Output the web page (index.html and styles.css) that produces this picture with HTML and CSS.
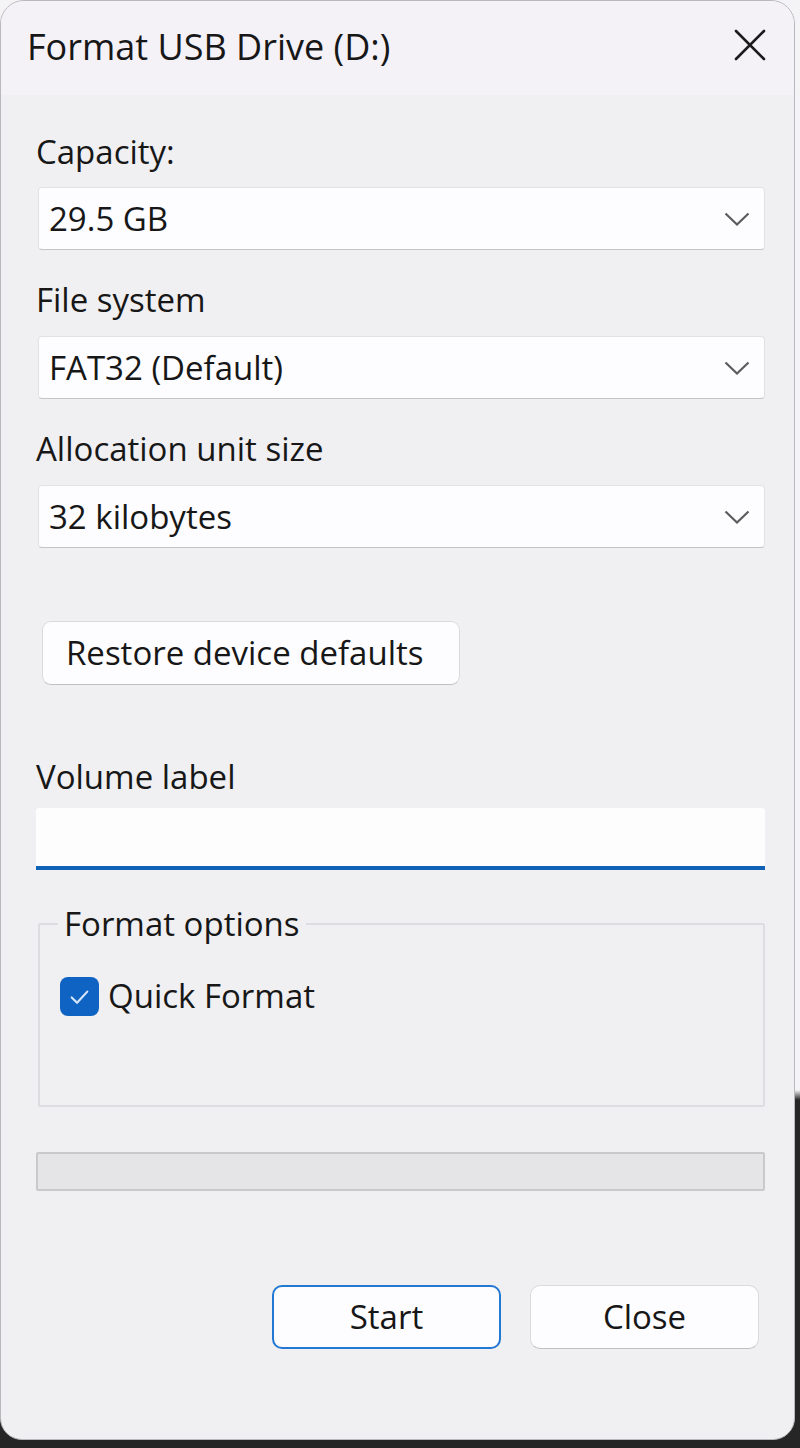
FILE: index.html
```html
<!DOCTYPE html>
<html lang="en">
<head>
<meta charset="utf-8">
<title>Format USB Drive (D:)</title>
<link rel="stylesheet" href="styles.css">
</head>
<body>
<div class="dialog">
  <header class="titlebar">
    <span class="title">Format USB Drive (D:)</span>
    <button class="close-x" aria-label="Close">
      <svg viewBox="0 0 32 32" width="32" height="32"><path d="M2 2 L30 30 M30 2 L2 30" stroke="#1c1c1c" stroke-width="2.6" fill="none" stroke-linecap="round"/></svg>
    </button>
  </header>
  <main class="content">
    <div class="field">
      <div class="label">Capacity:</div>
      <div class="combo"><span>29.5 GB</span><svg class="chev" viewBox="0 0 26 14" width="26" height="14"><path d="M1.5 1.5 L13 12.5 L24.5 1.5" stroke="#5c5c5c" stroke-width="2.2" fill="none"/></svg></div>
    </div>
    <div class="field">
      <div class="label">File system</div>
      <div class="combo"><span>FAT32 (Default)</span><svg class="chev" viewBox="0 0 26 14" width="26" height="14"><path d="M1.5 1.5 L13 12.5 L24.5 1.5" stroke="#5c5c5c" stroke-width="2.2" fill="none"/></svg></div>
    </div>
    <div class="field">
      <div class="label">Allocation unit size</div>
      <div class="combo"><span>32 kilobytes</span><svg class="chev" viewBox="0 0 26 14" width="26" height="14"><path d="M1.5 1.5 L13 12.5 L24.5 1.5" stroke="#5c5c5c" stroke-width="2.2" fill="none"/></svg></div>
    </div>
    <button class="btn restore">Restore device defaults</button>
    <div class="field volume">
      <div class="label">Volume label</div>
      <div class="textbox"></div>
    </div>
    <fieldset class="group">
      <legend>Format options</legend>
      <label class="check">
        <span class="box"><svg viewBox="0 0 40 40" width="39" height="39"><path d="M12 21 L17.5 26.5 L28 15" stroke="#d6e6fa" stroke-width="2.2" fill="none" stroke-linecap="round" stroke-linejoin="round"/></svg></span>
        <span class="check-text">Quick Format</span>
      </label>
    </fieldset>
    <div class="progress"></div>
    <div class="actions">
      <button class="btn action primary">Start</button>
      <button class="btn action">Close</button>
    </div>
  </main>
</div>
</body>
</html>
```
FILE: styles.css
```css
html {
  background: linear-gradient(to bottom, #f4f4f6 0, #f4f4f6 1090px, #262626 1100px);
  height: 100%;
}
body {
  margin: 0;
  font-family: "Open Sans", "Noto Sans", sans-serif;
  font-size: 33px;
  color: #171717;
}
.dialog {
  width: 795px;
  height: 1440px;
  box-sizing: border-box;
  background: #f0eff2;
  border: 1.5px solid #b9b9bd;
  border-radius: 24px 24px 22px 22px;
  overflow: hidden;
  display: flex;
  flex-direction: column;
}
.titlebar {
  height: 94px;
  flex: none;
  background: #f4f1f7;
  display: flex;
  align-items: center;
  justify-content: space-between;
  padding: 0 28px 0 26px;
}
.title {
  font-size: 36px;
  line-height: 40px;
  margin-top: -2px;
}
.close-x {
  border: 0;
  background: transparent;
  padding: 0;
  width: 32px;
  height: 32px;
  margin-top: -6px;
}
.close-x svg { display: block; }
.content {
  padding: 0 29px 0 35px;
  display: flex;
  flex-direction: column;
}
.field { display: flex; flex-direction: column; }
.label {
  line-height: 40px;
  margin-top: 30px;
  margin-bottom: 16px;
}
.field:first-child .label { margin-top: 37px; margin-bottom: 15px; }
.combo {
  height: 63px;
  box-sizing: border-box;
  background: #fdfcfe;
  border: 1.5px solid #e2e1e4;
  border-bottom-color: #c4c3c6;
  border-radius: 4px;
  display: flex;
  align-items: center;
  justify-content: space-between;
  padding: 0 14px 0 10px;
  margin-left: 2px;
}
.combo span { line-height: 40px; }
.chev { display: block; }
.btn {
  font: inherit;
  color: inherit;
  background: #fdfcfe;
  border: 1.5px solid #dbdadd;
  border-bottom-color: #c0bfc2;
  border-radius: 9px;
  box-sizing: border-box;
  line-height: 40px;
  padding: 0;
}
.restore {
  align-self: flex-start;
  margin: 73px 0 0 6px;
  width: 418px;
  height: 64px;
  text-align: left;
  padding-left: 23px;
}
.volume .label { margin-top: 72px; margin-bottom: 11px; }
.textbox {
  height: 62px;
  box-sizing: border-box;
  background: #fdfdfe;
  border-bottom: 4px solid #0f62b6;
  border-radius: 3px 3px 0 0;
}
.group {
  margin: 34px 0 0 2px;
  border: 2px solid #dddce0;
  border-radius: 2px;
  padding: 0 0 89px 20px;
  min-width: 0;
}
.group legend {
  padding: 0 6px;
  line-height: 40px;
  margin-left: -2px;
}
.check {
  display: flex;
  align-items: center;
  gap: 9px;
  margin-top: 32px;
}
.box {
  width: 39px;
  height: 39px;
  background: #0f63c2;
  border-radius: 8px;
  flex: none;
}
.box svg { display: block; }
.check-text { line-height: 40px; }
.progress {
  margin-top: 45px;
  height: 39px;
  box-sizing: border-box;
  background: #e5e4e7;
  border: 2px solid #c9c8cb;
  border-radius: 2px;
}
.actions {
  display: flex;
  justify-content: flex-end;
  gap: 29px;
  margin-top: 94px;
  margin-right: 6px;
}
.action {
  width: 229px;
  height: 64px;
  text-align: center;
  border-radius: 10px;
}
.primary {
  border: 2.5px solid #2278d2;
}
```
